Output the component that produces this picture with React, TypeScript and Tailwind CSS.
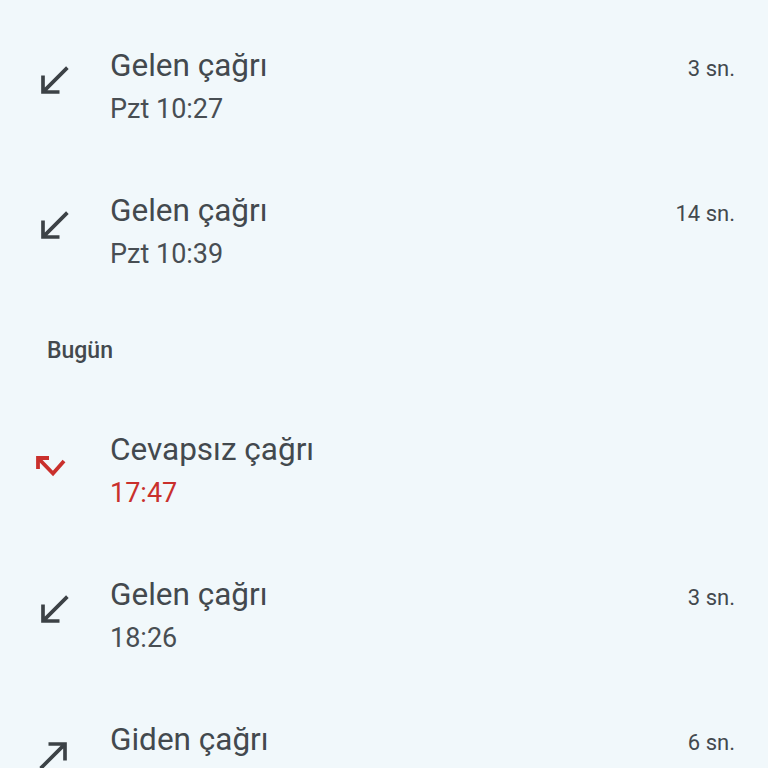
import React from "react";

type Kind = "in" | "missed" | "out";

type Call = {
  kind: Kind;
  title: string;
  time: string;
  duration?: string;
};

const earlier: Call[] = [
  { kind: "in", title: "Gelen çağrı", time: "Pzt 10:27", duration: "3 sn." },
  { kind: "in", title: "Gelen çağrı", time: "Pzt 10:39", duration: "14 sn." },
];

const today: Call[] = [
  { kind: "missed", title: "Cevapsız çağrı", time: "17:47" },
  { kind: "in", title: "Gelen çağrı", time: "18:26", duration: "3 sn." },
  { kind: "out", title: "Giden çağrı", time: "19:02", duration: "6 sn." },
];

function CallIcon({ kind }: { kind: Kind }) {
  if (kind === "missed") {
    return (
      <svg viewBox="0 0 30 22" className="h-[22px] w-[30px]" fill="none">
        <path d="M2 3 L17 18.5 L28 6" stroke="#c9302c" strokeWidth="3.8" strokeLinejoin="miter" />
        <path d="M2 14 V3 H13" stroke="#c9302c" strokeWidth="3.8" strokeLinejoin="miter" />
      </svg>
    );
  }
  if (kind === "out") {
    return (
      <svg viewBox="0 0 24 24" className="h-[44px] w-[44px] fill-[#3c4246]">
        <path d="M9 5v2h6.59L4 18.59 5.41 20 17 8.41V15h2V5z" />
      </svg>
    );
  }
  return (
    <svg viewBox="0 0 24 24" className="h-[44px] w-[44px] fill-[#3c4246]">
      <path d="M20 5.41L18.59 4 7 15.59V9H5v10h10v-2H8.41z" />
    </svg>
  );
}

function CallRow({ call }: { call: Call }) {
  const missed = call.kind === "missed";
  return (
    <div className="flex h-[145px] items-center">
      <div
        className={
          missed
            ? "flex w-[110px] justify-start pl-[36px] -mt-[10px]"
            : "flex w-[110px] justify-start pl-[32px] -mt-[12px]"
        }
      >
        <CallIcon kind={call.kind} />
      </div>
      <div className="flex flex-1 flex-col pr-[33px]">
        <div className="flex items-baseline justify-between">
          <span className="text-[31.5px] leading-[40px] text-[#43494e]">{call.title}</span>
          {call.duration && (
            <span className="text-[22px] leading-[30px] text-[#43494e]">{call.duration}</span>
          )}
        </div>
        <span
          className={
            missed
              ? "mt-[5px] text-[27px] leading-[36px] text-[#c9302c]"
              : "mt-[5px] text-[27px] leading-[36px] text-[#484e53]"
          }
        >
          {call.time}
        </span>
      </div>
    </div>
  );
}

export default function App() {
  return (
    <div className="h-[768px] w-[768px] overflow-hidden bg-[#f1f8fb] pt-[14px] font-['Roboto',sans-serif]">
      {earlier.map((c, i) => (
        <CallRow key={"e" + i} call={c} />
      ))}

      {/* section header */}
      <div className="flex h-[94px] items-center pl-[47px]">
        <span className="text-[23px] font-medium text-[#43494e]">Bugün</span>
      </div>

      {today.map((c, i) => (
        <CallRow key={"t" + i} call={c} />
      ))}
    </div>
  );
}
